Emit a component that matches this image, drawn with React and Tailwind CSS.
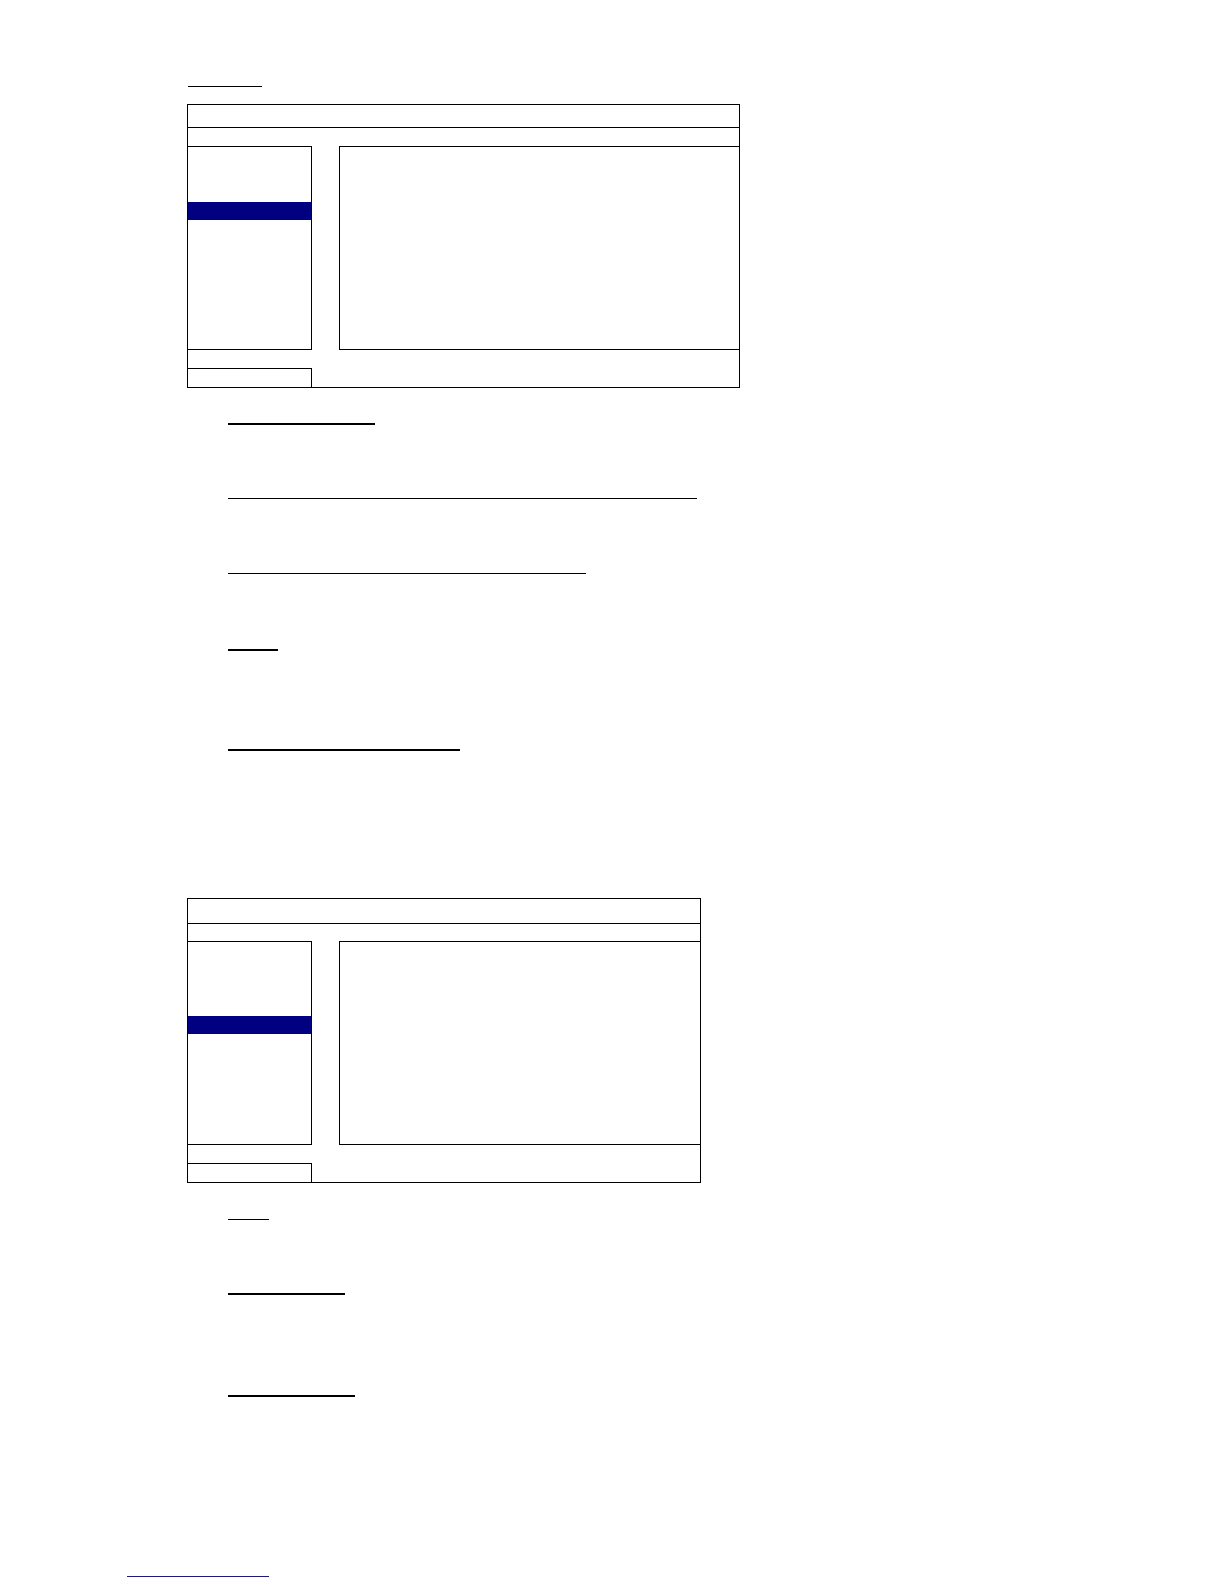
import React from 'react';

// Menu screen mock-up: header, tab row, item list with a selected row,
// detail pane and a footer hint area. Text is blank in the picture.
const MenuScreen = ({ width, header, tabRow, selectedOffset }) => {
  return (
    <div className="flex flex-col border border-black bg-white" style={{ width }}>
      <div className="border-b border-black" style={{ height: header }} />
      <div style={{ height: tabRow }} />
      <div className="flex h-[204px]">
        <div className="w-[124px] border-t border-r border-b border-black flex flex-col">
          <div style={{ height: selectedOffset }} />
          <div className="h-[18px] bg-[#000080]" />
        </div>
        <div className="w-[27px]" />
        <div className="flex-1 border-t border-l border-b border-black" />
      </div>
      <div className="h-[18px]" />
      <div className="w-[124px] h-[19px] border-t border-r border-black" />
    </div>
  );
};

const Heading = ({ w, thick, mt }) => (
  <div
    className={`ml-[41px] bg-black ${thick ? 'h-[2px]' : 'h-[1px]'}`}
    style={{ width: w, marginTop: mt }}
  />
);

export default function App() {
  return (
    <div className="w-[1224px] h-[1584px] bg-white font-['Liberation_Sans',sans-serif]">
      <div className="flex flex-col pt-[86px] pl-[187px]">
        <div className="ml-[1px] w-[74px] h-[1px] bg-black" />

        <div className="mt-[17px]">
          <MenuScreen width={553} header={23} tabRow={18} selectedOffset={55} />
        </div>

        <Heading w={147} thick mt={35} />
        <Heading w={469} mt={73} />
        <Heading w={358} mt={74} />
        <Heading w={50} thick mt={75} />
        <Heading w={232} thick mt={98} />

        <div className="mt-[147px]">
          <MenuScreen width={514} header={25} tabRow={17} selectedOffset={74} />
        </div>

        <Heading w={41} mt={36} />
        <Heading w={117} thick mt={73} />
        <Heading w={127} thick mt={100} />
      </div>

      {/* footnote rule */}
      <div className="mt-[179px] ml-[127px] w-[142px] h-[1px] bg-[#1a1a80]" />
    </div>
  );
}
